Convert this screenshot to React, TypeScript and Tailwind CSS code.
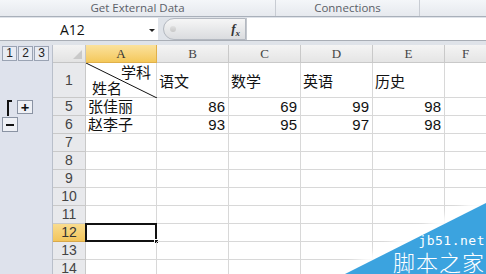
import React from "react";

const colWidths = [71, 72, 72, 72, 72];
const colLetters = ["A", "B", "C", "D", "E"];

interface SheetRow {
  label: string;
  height: number;
  cells: string[];
}

const rows: SheetRow[] = [
  { label: "1", height: 35, cells: ["", "语文", "数学", "英语", "历史"] },
  { label: "5", height: 18, cells: ["张佳丽", "86", "69", "99", "98"] },
  { label: "6", height: 18, cells: ["赵李子", "93", "95", "97", "98"] },
  { label: "7", height: 18, cells: [] },
  { label: "8", height: 18, cells: [] },
  { label: "9", height: 18, cells: [] },
  { label: "10", height: 18, cells: [] },
  { label: "11", height: 18, cells: [] },
  { label: "12", height: 18, cells: [] },
  { label: "13", height: 18, cells: [] },
  { label: "14", height: 18, cells: [] },
];

const cjk = "font-['Liberation_Sans','Noto_Sans_CJK_SC',sans-serif]";

function OutlinePanel() {
  return (
    <div className="w-[53px] shrink-0 bg-[#dee2ec] border-r border-[#b9bfca] flex flex-col">
      <div className="h-[18px] flex items-start pt-[1px] pl-[2px] gap-[1px]">
        {["1", "2", "3"].map((n) => (
          <div
            key={n}
            className="w-[15px] h-[15px] border border-[#9aa3b3] bg-[#e8ebf2] text-[12px] leading-[13px] text-center text-[#222] font-['Liberation_Sans',sans-serif]"
          >
            {n}
          </div>
        ))}
      </div>
      <div className="h-[35px]" />
      <div className="relative h-[36px]">
        <div className="absolute left-[7px] top-[2px] w-[5px] h-[16px] border-l-2 border-t-2 border-[#111]" />
        <div className="absolute left-[17px] top-[2px] w-[16px] h-[14px] border border-[#8a93a3] bg-[#eef0f5] flex items-center justify-center text-[15px] font-bold leading-none text-[#111]">
          +
        </div>
        <div className="absolute left-[2px] top-[19px] w-[16px] h-[15px] border border-[#8a93a3] bg-[#eef0f5] flex items-center justify-center">
          <div className="w-[8px] h-[2px] bg-[#111]" />
        </div>
      </div>
    </div>
  );
}

function Sheet() {
  return (
    <div className="flex-1 flex flex-col bg-white">
      <div className="h-[18px] flex shrink-0">
        <div className="w-[33px] shrink-0 bg-gradient-to-b from-[#f3f3f3] to-[#e3e3e3] border-r border-b border-[#c5c5c5] relative">
          <div className="absolute right-[3px] bottom-[3px] w-0 h-0 border-l-[9px] border-l-transparent border-b-[9px] border-b-[#c9c9c9]" />
        </div>
        {colLetters.map((c, i) => (
          <div
            key={c}
            style={{ width: colWidths[i] }}
            className={
              i === 0
                ? "shrink-0 bg-gradient-to-b from-[#fbe29c] to-[#f4c85a] border-r border-b border-[#e0b04a] flex items-center justify-center text-[13px] text-[#333] font-['Liberation_Serif',serif]"
                : "shrink-0 bg-gradient-to-b from-[#f4f4f4] to-[#e5e5e5] border-r border-b border-[#c9c9c9] flex items-center justify-center text-[13px] text-[#444] font-['Liberation_Serif',serif]"
            }
          >
            {c}
          </div>
        ))}
        <div className="flex-1 bg-gradient-to-b from-[#f4f4f4] to-[#e5e5e5] border-b border-[#c9c9c9] flex items-center justify-center text-[13px] text-[#444] font-['Liberation_Serif',serif]">
          F
        </div>
      </div>
      {rows.map((r) => (
        <div key={r.label} style={{ height: r.height }} className="flex shrink-0">
          <div
            className={
              r.label === "12"
                ? "w-[33px] shrink-0 bg-gradient-to-b from-[#f9dc8e] to-[#f3c55a] border-r border-b border-[#d9a94a] flex items-center justify-center text-[14px] text-[#333] font-['Liberation_Sans',sans-serif]"
                : "w-[33px] shrink-0 bg-[#e8e9ec] border-r border-b border-[#c9c9c9] flex items-center justify-center text-[14px] text-[#444] font-['Liberation_Sans',sans-serif]"
            }
          >
            {r.label}
          </div>
          {colWidths.map((w, i) => {
            const v = r.cells[i] ?? "";
            const isNum = /^\d+$/.test(v);
            const selected = r.label === "12" && i === 0;
            return (
              <div
                key={i}
                style={{ width: w }}
                className={`shrink-0 border-r border-b border-[#d8d8d8] relative flex ${
                  r.label === "1" ? "items-end pb-[8px]" : "items-center"
                } ${isNum ? "justify-end pr-[3px]" : "justify-start pl-[2px]"} text-[15px] leading-none text-[#111] ${cjk}`}
              >
                {r.label === "1" && i === 0 ? (
                  <>
                    <svg className="absolute inset-0" width={w} height={r.height}>
                      <line x1="0" y1="0" x2={w} y2={r.height} stroke="#111" strokeWidth="1" />
                    </svg>
                    <span className="absolute right-[5px] top-[2px]">学科</span>
                    <span className="absolute left-[6px] bottom-[1px]">姓名</span>
                  </>
                ) : (
                  v
                )}
                {selected && (
                  <>
                    <div className="absolute -left-[1px] -top-[1px] w-[72px] h-[19px] border-2 border-[#111]" />
                    <div className="absolute -right-[3px] -bottom-[3px] w-[5px] h-[5px] bg-[#111] border border-white" />
                  </>
                )}
              </div>
            );
          })}
          <div className="flex-1 border-b border-[#d8d8d8]" />
        </div>
      ))}
    </div>
  );
}

function Watermark() {
  return (
    <div className="absolute right-0 bottom-0 w-[150px] h-[80px]">
      <svg className="absolute inset-0" width="150" height="80">
        <defs>
          <filter id="glow" x="-20%" y="-20%" width="140%" height="140%">
            <feGaussianBlur stdDeviation="3" />
          </filter>
        </defs>
        <polygon points="-6,80 150,0 150,80" fill="#ffffff" opacity="0.9" filter="url(#glow)" />
        <polygon points="9,80 150,9 150,80" fill="#3ba3df" />
      </svg>
      <div className="absolute right-[1px] top-[41px] text-[13px] leading-[12px] text-white tracking-[0.5px] font-['DejaVu_Sans_Mono',monospace]">
        jb51.net
      </div>
      <div className="absolute right-[1px] top-[56px] text-[22px] leading-[22px] text-white font-['Noto_Sans_CJK_SC',sans-serif] font-light tracking-[1px]">
        脚本之家
      </div>
    </div>
  );
}

export default function App() {
  return (
    <div className="w-[486px] h-[274px] overflow-hidden relative flex flex-col bg-white font-['Open_Sans',sans-serif]">
      <div className="h-[17px] shrink-0 flex bg-gradient-to-b from-[#f4f6f9] to-[#e6e9ee] border-b border-[#a9b0ba] text-[11.5px] leading-[16px] text-[#5b6068]">
        <div className="w-[276px] shrink-0 border-r border-[#c8ccd3] text-center">Get External Data</div>
        <div className="w-[144px] shrink-0 border-r border-[#c8ccd3] text-center">Connections</div>
        <div className="flex-1" />
      </div>
      <div className="h-[28px] shrink-0 bg-[#dfe3e9] pt-[1px] flex flex-col">
        <div className="h-[23px] flex border-b border-[#a9aeb6]">
          <div className="w-[158px] shrink-0 bg-white flex items-center relative">
            <span className="pl-[60px] text-[14px] text-[#111] font-['Open_Sans',sans-serif]">A12</span>
            <div className="absolute left-[149px] top-[11px] w-0 h-0 border-l-[3px] border-r-[3px] border-t-[3px] border-l-transparent border-r-transparent border-t-[#222]" />
          </div>
          <div className="w-[5px] shrink-0" />
          <div className="w-[83px] shrink-0 rounded-l-full border border-[#b3b8c0] bg-gradient-to-b from-[#f6f6f6] to-[#dadcdf] flex items-center justify-between pl-[6px] pr-[5px]">
            <div className="w-[6px] h-[6px] rounded-full bg-gradient-to-b from-[#e0e0e0] to-[#c7c7c7]" />
            <span className="text-[13px] italic font-bold text-[#333] font-['Liberation_Serif',serif]">
              f<sub className="text-[9px]">x</sub>
            </span>
          </div>
          <div className="flex-1 bg-white border-l border-[#c3c7cd]" />
        </div>
      </div>
      <div className="flex flex-1 min-h-0">
        <OutlinePanel />
        <Sheet />
      </div>
      <Watermark />
    </div>
  );
}
